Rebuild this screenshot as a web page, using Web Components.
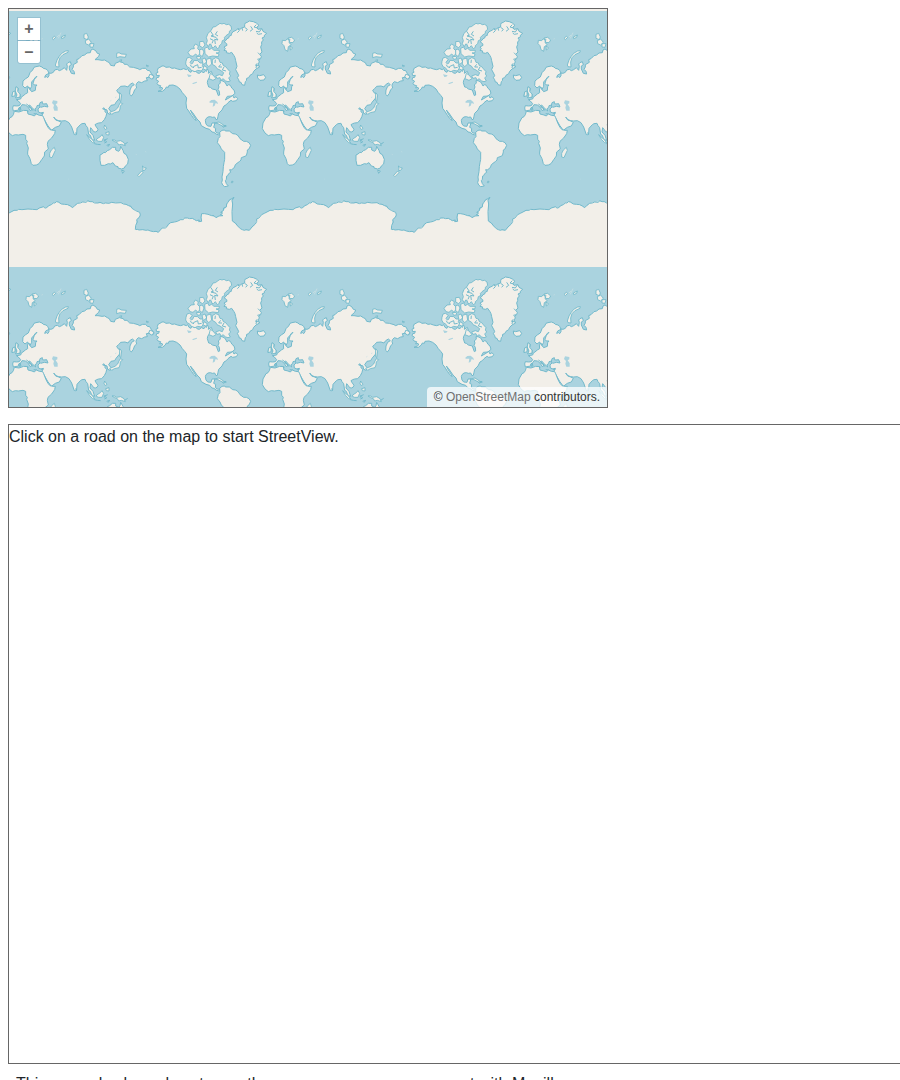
<!DOCTYPE html>
<html lang="en">
<head>
<meta charset="utf-8">
<title>Street view with Mapillary</title>
<style>
  body {
    margin: 8px 0 8px 8px;
    overflow-x: hidden;
    background: #fff;
    color: #212529;
    font: 16px/24px "Liberation Sans", Arial, sans-serif;
  }
</style>
</head>
<body>
<streetview-example></streetview-example>

<script>
class WorldMap extends HTMLElement {
  constructor() {
    super();
    const root = this.attachShadow({ mode: "open" });
    const copies = [];
    for (const y of [-256, 0, 256])
      for (const x of [-256, 0, 256, 512])
        copies.push(`<use href="#world" x="${x}" y="${y}"/>`);
    root.innerHTML = `
      <style>
        :host { display: block; }
        svg { display: block; width: 100%; height: 100%; background: #aad3df; }
        .land { fill: #f2efe9; stroke: #72b9cb; stroke-width: 3; stroke-linejoin: round; }
        .isle { fill: #f2efe9; stroke: #72b9cb; stroke-width: 2.6; stroke-linejoin: round; }
        .sea { fill: #aad3df; stroke: #72b9cb; stroke-width: 3; stroke-linejoin: round; }
        .lake { fill: #aad3df; }
        .line { fill: none; stroke: #72b9cb; stroke-width: 3; }
      </style>
      <svg role="img" aria-label="World map">
        <defs>
          <g id="world">
            <g transform="translate(141 -1) scale(.333333)">
              <path class="land" d="M0 198 10 203 12 208 4 213-4 207Z"/>
              <path class="land" d="M22 187 25 180 30 178 36 174 42 174 48 178 58 177 66 181 74 180 82 183 92 185 101 182 109 185 113 182 117 190 123 193 126 185 132 191 138 190 142 195 148 196 154 191 162 194 166 188 170 190 172 183 176 188 175 196 184 190 187 198 181 204 177 211 173 217 172 224 176 237 181 238 187 243 199 246 201 252 205 263 209 261 208 250 204 244 207 237 205 231 211 225 210 218 216 218 224 222 228 228 231 234 236 230 241 232 246 241 252 246 255 256 246 264 232 265 226 276 240 268 248 262 252 270 258 266 263 272 259 278 248 280 243 277 234 284 229 290 222 294 216 306 206 316 204 325 202 334 198 335 194 327 187 328 181 326 174 327 168 332 166 338 168 348 173 354 183 355 186 345 195 345 191 358 197 361 196 371 204 376 211 374 206 381 198 378 192 373 186 372 179 364 168 361 154 353 150 342 141 333 128 314 121 306 128 320 136 331 138 338 131 331 125 323 116 309 110 301 108 285 110 270 105 263 97 254 90 243 80 235 69 231 57 232 55 238 49 237 46 243 37 250 24 250 34 246 38 243 36 238 29 240 32 233 24 231 21 226 26 220 18 215 20 209 26 208 28 202 20 203 18 196 24 193Z"/>
              <path class="land" d="M222 101 228 97 231 92 236 90 238 84 244 82 244 78 249 71 258 67 264 62 270 64 275 60 284 57 284 50 286 45 292 43 298 39 310 41 319 45 327 52 320 58 324 64 336 62 339 70 350 76 343 82 343 87 336 90 340 96 335 102 335 110 332 117 336 132 329 139 334 145 332 152 326 156 328 162 324 168 329 177 318 183 311 190 308 197 300 202 296 209 290 211 289 218 286 221 284 232 276 230 273 223 268 222 266 215 262 209 266 203 264 198 257 185 261 175 257 158 255 149 252 143 245 133 238 136 229 134 230 129 222 127 226 122 222 117 231 112 230 107Z"/>
              <path class="line" d="M284 58 292 64 287 70M319 50 312 57 323 60M302 55 308 64 300 70M334 63 328 72 318 70M336 77 325 79 320 75M329 139 324 134M331 152 322 154M315 171 327 174M318 180 321 166M264 62 268 68 262 74M276 60 278 68"/>
              <path class="isle" d="M169 89 174 76 183 68 189 57 196 56 203 51 210 46 216 48 222 46 229 50 236 49 243 54 245 64 238 70 238 76 228 83 223 89 225 94 217 98 215 107 208 113 208 118 202 122 196 113 190 119 186 118 183 109 179 108 175 116 169 107 172 98Z"/>
              <path class="line" d="M182 70 190 82 183 84 198 88 204 96 194 94 196 108M202 70 196 79 204 84M180 92 190 97 186 106"/>
              <path class="isle" d="M114 133 123 123 133 122 131 116 136 108 145 113 143 122 149 128 151 136 143 144 137 138 129 145 120 143Z"/>
              <path class="isle" d="M108 160 111 150 118 148 127 154 120 163 124 168 128 166 132 157 143 158 150 165 160 165 157 173 161 180 154 189 143 187 135 191 124 187 118 179 112 177 107 168Z"/>
              <path class="line" d="M130 176 143 170 145 180 155 178M121 170 124 176 132 179"/>
              <path class="isle" d="M149 101 160 100 165 111 158 119 149 114ZM149 125 157 123 162 132 157 146 149 140ZM164 121 173 117 177 125 185 121 192 127 208 127 207 134 198 135 207 138 205 146 188 144 176 147 165 137ZM156 154 165 150 170 162 160 170ZM170 154 182 150 185 168 176 176 169 168ZM162 173 173 180 166 186 159 182ZM139 146 150 145 153 152 143 154Z"/>
              <path class="isle" d="M187 155 197 149 206 152 210 163 217 165 220 173 227 176 232 182 240 191 238 198 242 204 236 210 241 219 234 221 227 219 219 212 213 217 210 209 201 211 197 204 208 200 217 203 221 194 210 186 201 182 197 175 187 169Z"/>
              <path class="line" d="M212 169 206 177 216 177M196 155 195 165M222 177 217 186 228 189"/>
              <path class="isle" d="M181 196 189 201 198 212 189 217 177 212Z"/>
              <path class="land" d="M322 201 329 203 341 200 347 208 342 216 330 217 323 210ZM366 237 373 241 371 251 378 258 378 268 365 269 369 261 364 249ZM356 252 363 250 363 263 354 265Z"/>
              <path class="lake" d="M111 199 125 202 121 206 115 207ZM126 226 140 221 141 224 130 228ZM178 281 184 276 194 275 202 282 204 288 197 285 194 293 188 296 190 284 179 284Z"/>
              <path class="isle" d="M193 345 207 342 222 352 229 354 217 354 204 347ZM217 355 228 353 220 358Z"/>
            </g>

            <g transform="translate(171 71) scale(.333333)">
              <path class="land" d="M119 157 126 151 134 150 136 153 148 153 158 161 166 162 172 165 177 171 180 176 191 184 199 184 207 188 212 196 207 207 202 210 202 216 199 227 192 230 184 233 183 240 179 244 171 250 166 254 163 263 158 266 155 270 149 269 152 277 146 281 143 287 140 288 139 298 136 302 139 311 145 318 134 320 128 315 125 308 127 300 126 291 129 275 130 260 132 248 134 238 134 217 124 207 120 198 112 188 115 175 120 170Z"/>
              <path class="land" d="M155 304 159 304 158 308 154 308Z"/>
            </g>

            <g transform="translate(261 -1) scale(.333333)">
              <path class="land" d="M-2 309-4 300-2 293 8 294 16 293 20 287 13 279 7 275 20 273 22 267 27 264 34 258 41 254 40 241 45 237 49 246 53 251 64 247 65 236 69 231 61 231 57 226 61 214 69 205 64 208 60 214 53 222 53 235 48 244 43 240 41 234 33 240 26 233 27 219 35 212 43 207 48 194 56 186 60 178 66 176 76 174 84 177 88 181 96 183 101 187 105 196 95 201 92 208 98 206 101 209 105 203 105 195 111 196 118 193 122 186 130 184 136 188 143 185 151 179 158 187 160 175 158 168 162 164 169 161 172 170 166 174 166 183 172 196 182 198 180 190 174 184 178 177 178 170 190 163 188 155 195 152 204 143 212 141 219 135 229 134 231 126 237 123 246 129 250 136 257 138 254 145 243 155 252 155 264 157 272 156 280 161 286 164 290 172 301 174 304 166 316 161 328 164 331 169 339 169 347 177 358 178 372 182 377 185 386 181 395 181 400 187 407 188 412 196 419 205 416 213 410 208 405 208 397 209 400 218 392 219 383 224 373 221 368 226 366 232 368 240 362 245 358 256 352 264 347 259 348 246 353 235 361 230 355 225 347 230 342 237 333 234 320 235 314 242 308 247 312 254 319 258 317 270 306 283 302 290 291 292 284 302 291 311 289 319 281 316 279 306 273 304 269 299 266 303 275 305 272 309 278 317 276 325 271 335 263 344 254 345 248 347 243 350 245 354 252 364 249 370 244 372 239 371 235 365 230 359 228 372 237 382 242 397 236 395 232 390 229 382 224 379 221 359 216 353 213 346 204 347 199 350 189 361 188 376 181 380 173 357 165 344 154 338 143 339 134 338 126 335 119 327 125 336 134 339 142 343 136 354 124 358 112 367 101 352 84 322 88 313 81 315 73 312 72 303 79 296 77 291 69 293 68 299 63 302 65 309 57 302 47 291 43 293 47 299 54 302 50 309 41 296 34 291 24 290 21 296 14 300 14 306Z"/>
              <path class="sea" d="M76 294 78 284 85 281 85 287 90 288 98 287 102 297 91 295 80 298Z"/>
              <path class="lake" d="M117 277 130 279 130 286 125 289 131 298 131 308 121 308 118 299 120 291 114 285Z"/>
              <path class="isle" d="M37 97 47 98 51 93 60 94 57 104 64 110 55 116 53 130 45 125 42 113 36 107ZM54 90 65 88 74 96 69 104 59 103ZM60 114 68 120 61 126Z"/>
              <path class="isle" d="M124 171 129 156 135 146 143 136 155 129 163 128 162 133 147 140 138 149 134 162 135 177 126 176Z"/>
              <path class="isle" d="M210 79 218 76 223 87 220 95 210 91ZM214 98 224 93 232 103 224 111 215 107ZM228 107 240 107 237 118 228 117ZM308 136 315 134 322 138 337 139 334 148 318 146 308 149Z"/>
              <path class="isle" d="M114 91 121 85 125 88 118 95ZM142 87 154 81 152 88 143 92ZM317 157 323 155 322 161ZM397 171 404 174 399 177Z"/>
              <path d="M83 93 86 92M129 87 135 81M133 91 141 74" fill="none" stroke="#d0e2e4" stroke-width="2"/>
              <path class="isle" d="M317 254 323 261 320 281 317 277ZM319 284 326 287 319 294 318 303 315 311 301 314 293 319 287 313 303 307 311 300 315 291Z"/>
              <path class="isle" d="M6 236 12 240 11 250 18 258 18 267 5 270 9 261 4 249ZM-4 252 3 249 3 263-6 266Z"/>
              <path class="line" d="M37 288 43 292 52 301 57 308M18 297 21 305 17 308ZM33 307 43 309 39 313ZM59 317 69 318M81 316 89 315"/>
            </g>

            <g transform="translate(251 81) scale(.333333)">
              <path class="land" d="M31 64 45 66 59 61 70 62 72 72 84 75 91 78 97 72 106 76 116 77 119 83 126 101 132 112 138 119 147 121 154 121 152 131 143 144 132 154 130 163 133 177 122 186 121 198 113 209 105 221 97 225 87 226 82 221 78 206 71 193 71 186 73 174 68 160 70 154 65 148 65 136 57 133 43 135 34 134 25 137 15 129 7 116 9 99 18 83 24 80 28 74Z"/>
              <path class="isle" d="M151 172 154 181 149 192 144 203 137 201 137 190 142 180Z"/>
              <path class="land" d="M288 195 294 192 300 187 304 188 310 182 317 179 325 172 335 172 335 180 344 184 348 179 350 169 357 181 360 190 367 194 373 208 371 222 364 228 361 234 353 237 342 234 342 230 334 228 327 218 319 222 313 221 302 226 291 226 288 211ZM353 241 361 243 356 250Z"/>
              <path class="isle" d="M415 228 421 233 427 234 422 241 416 242 417 235ZM413 243 417 248 405 260 401 256Z"/>
              <path class="isle" d="M248 134 258 143 266 150 272 159 266 158 257 149ZM278 147 289 140 294 134 299 142 294 154 284 154 277 151ZM324 150 331 150 338 154 350 152 360 158 364 167 352 163 344 165 340 158 332 155ZM302 105 309 115 304 119 300 112ZM305 128 315 125 315 135 307 134Z"/>
              <path class="line" d="M271 161 280 163 290 164M311 146 302 150 308 156 301 159M301 148 301 155M362 163 371 157M308 166 317 163 312 170M215 127 219 132 215 135"/>
              <path d="M319 33 322 31M333 23 337 21M395 193 399 194M193 267 195 268M424 183 426 187" fill="none" stroke="#bcdbe2" stroke-width="2"/>
            </g>

            <g transform="translate(121 171) scale(.333333)">
              <path fill="#f2efe9" d="M18 261V149L38 150 54 150 61 153 85 157 97 144 111 140 122 128 142 124 162 115 172 114 187 116 199 122 215 124 215 101 234 102 245 107 258 113 267 108 279 107 272 98 280 92 289 81 293 68 304 57 306 62 307 123 331 146 343 151 358 151 376 132 380 118 395 104 411 96 434 88 489 88 509 80 517 84 538 69 549 65 562 72 581 74 596 83 611 70 626 66 641 64 655 66 671 70 694 69 741 68 764 77 774 85 797 97 799 105 788 119 784 149 789 151V261Z"/>
              <path class="line" stroke-linejoin="round" d="M18 149 22 148 27 150 38 149 48 151 54 150 61 153 71 155 78 154 85 157 91 150 97 144 106 144 111 140 115 133 122 128 134 126 142 124 152 119 160 119 163 114 172 114 179 116 187 115 194 119 199 122 208 120 206 125 215 124 213 112 215 101 224 101 234 103 245 107 252 107 258 113 267 108 279 107 271 104 278 99 272 97 280 92 281 84 289 81 290 72 293 68 299 59 304 57 312 52 306 62 308 72 306 95 307 123 316 129 323 138 331 146 337 149 343 151 348 149 358 151 366 141 376 132 380 125 380 117 387 114 395 104 403 100 411 96 420 91 429 91 434 88 444 89 462 87 475 88 489 89 496 84 509 80 512 84 517 84 524 77 532 74 538 69 543 69 547 65 553 66 562 72 572 73 581 74 589 78 596 83 603 76 611 70 619 69 626 66 637 67 641 62 648 65 655 65 662 69 671 69 678 67 688 71 694 69 705 70 713 67 725 69 741 68 748 72 756 73 764 77 771 79 774 85 785 92 797 97 799 105 796 112 788 119 790 126 785 136 784 149"/>
            </g>
          </g>
        </defs>
        ${copies.join("")}
      </svg>`;
  }
}
customElements.define("world-map", WorldMap);

class MapZoom extends HTMLElement {
  constructor() {
    super();
    this.attachShadow({ mode: "open" }).innerHTML = `
      <style>
        :host { display: grid; gap: 1px; width: 22px; }
        button {
          display: block; box-sizing: border-box; width: 22px; height: 22px;
          margin: 0; padding: 0; border: 0; background: #fff; color: #666;
          font: bold 16px/22px "Liberation Sans", Arial, sans-serif;
          text-align: center; outline: 1px solid rgba(102, 153, 178, .3);
        }
        button:first-child { border-radius: 2px 2px 0 0; }
        button:last-child { border-radius: 0 0 2px 2px; }
      </style>
      <button type="button" title="Zoom in">+</button>
      <button type="button" title="Zoom out">–</button>`;
  }
}
customElements.define("map-zoom", MapZoom);

class MapView extends HTMLElement {
  constructor() {
    super();
    this.attachShadow({ mode: "open" }).innerHTML = `
      <style>
        :host {
          display: block; position: relative; box-sizing: border-box;
          max-width: 600px; height: 400px; overflow: hidden; border: 1px solid #666;
        }
        world-map { height: 100%; }
        map-zoom { position: absolute; top: 9px; left: 9px; }
        .attribution {
          position: absolute; right: 0; bottom: 0; padding: 0 7px;
          border-radius: 4px 0 0 0; background: rgba(255, 255, 255, .75);
          color: #333; font-size: 12px; line-height: 20px;
        }
      </style>
      <world-map></world-map>
      <map-zoom></map-zoom>
      <div class="attribution"><slot></slot></div>`;
  }
}
customElements.define("map-view", MapView);

class StreetviewPanel extends HTMLElement {
  constructor() {
    super();
    this.attachShadow({ mode: "open" }).innerHTML = `
      <style>
        :host {
          display: block; box-sizing: border-box; width: 100vw;
          height: 640px; margin-top: 16px; border: 1px solid #666;
        }
      </style>
      <slot></slot>`;
  }
}
customElements.define("streetview-panel", StreetviewPanel);

class StreetviewExample extends HTMLElement {
  constructor() {
    super();
    this.attachShadow({ mode: "open" }).innerHTML = `
      <style>
        :host { display: block; }
        p { margin: 0; padding: 8px; }
        a { color: #707070; text-decoration: none; }
        code { color: #e83e8c; font: 13px "Liberation Mono", monospace; }
      </style>
      <map-view>© <a href="#copyright">OpenStreetMap</a> contributors.</map-view>
      <streetview-panel>Click on a road on the map to start StreetView.</streetview-panel>
      <p>This example shows how to use the <code>ngeo-streetview</code> component with Mapillary.</p>`;
  }
}
customElements.define("streetview-example", StreetviewExample);
</script>
</body>
</html>
